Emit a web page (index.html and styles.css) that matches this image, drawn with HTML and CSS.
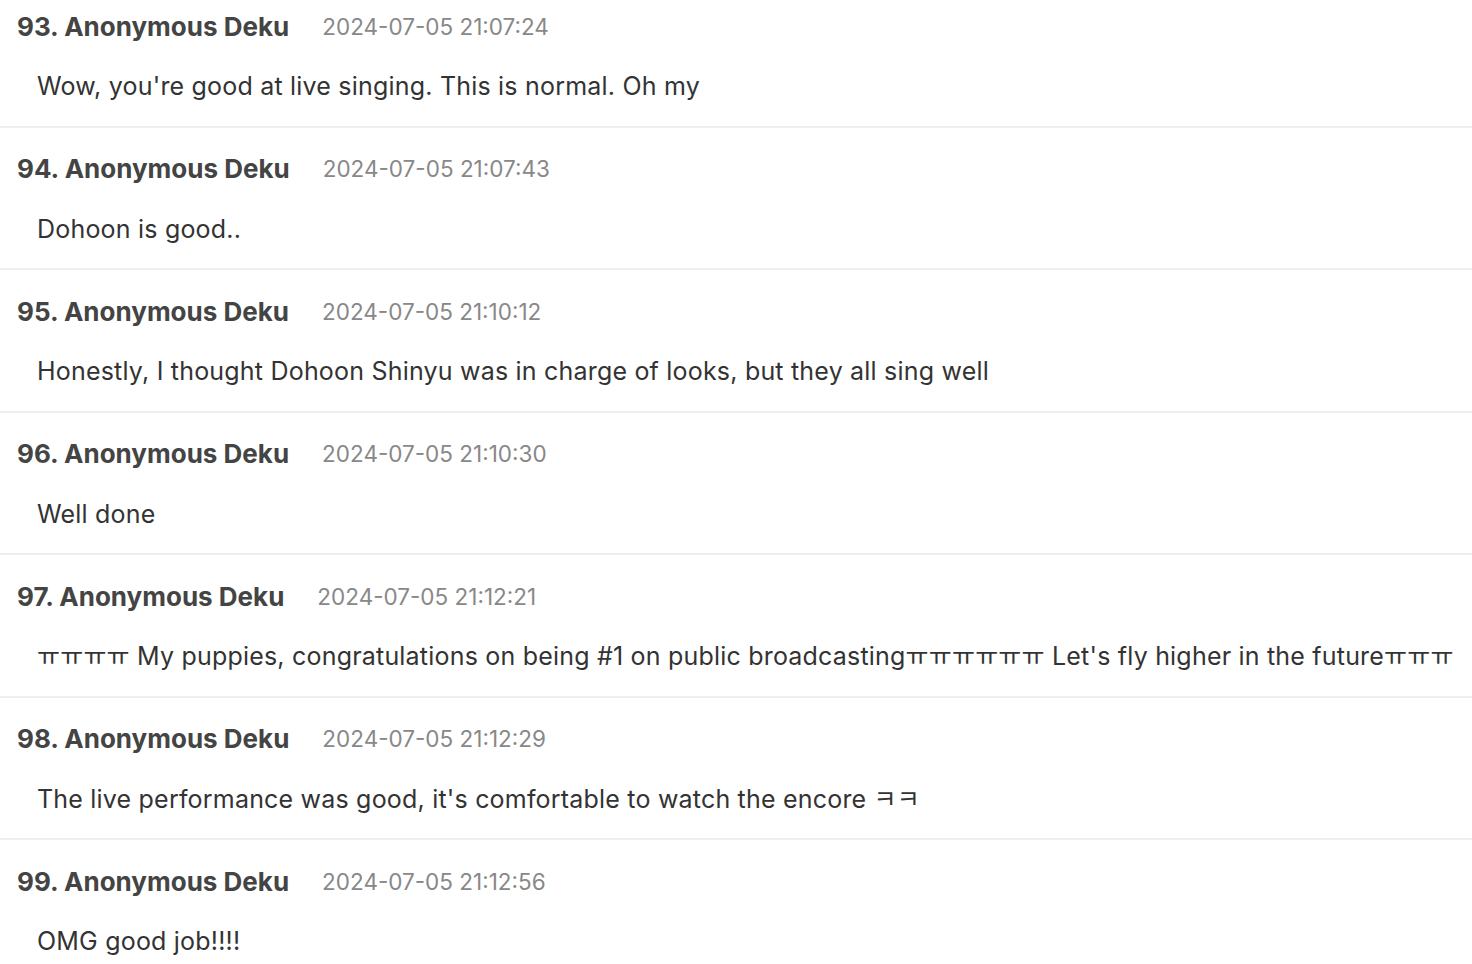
FILE: index.html
```html
<!DOCTYPE html>
<html lang="en">
<head>
<meta charset="utf-8">
<link rel="stylesheet" href="styles.css">
</head>
<body>
<ul class="comments">
  <li class="comment">
    <div class="head"><span class="name">93. Anonymous Deku</span><span class="date">2024-07-05 21:07:24</span></div>
    <p class="text">Wow, you're good at live singing. This is normal. Oh my</p>
  </li>
  <li class="comment">
    <div class="head"><span class="name">94. Anonymous Deku</span><span class="date">2024-07-05 21:07:43</span></div>
    <p class="text">Dohoon is good..</p>
  </li>
  <li class="comment">
    <div class="head"><span class="name">95. Anonymous Deku</span><span class="date">2024-07-05 21:10:12</span></div>
    <p class="text">Honestly, I thought Dohoon Shinyu was in charge of looks, but they all sing well</p>
  </li>
  <li class="comment">
    <div class="head"><span class="name">96. Anonymous Deku</span><span class="date">2024-07-05 21:10:30</span></div>
    <p class="text">Well done</p>
  </li>
  <li class="comment">
    <div class="head"><span class="name">97. Anonymous Deku</span><span class="date">2024-07-05 21:12:21</span></div>
    <p class="text">ㅠㅠㅠㅠ My puppies, congratulations on being #1 on public broadcastingㅠㅠㅠㅠㅠㅠ Let's fly higher in the futureㅠㅠㅠ</p>
  </li>
  <li class="comment">
    <div class="head"><span class="name">98. Anonymous Deku</span><span class="date">2024-07-05 21:12:29</span></div>
    <p class="text">The live performance was good, it's comfortable to watch the encore ㅋㅋ</p>
  </li>
  <li class="comment">
    <div class="head"><span class="name">99. Anonymous Deku</span><span class="date">2024-07-05 21:12:56</span></div>
    <p class="text">OMG good job!!!!</p>
  </li>
</ul>
</body>
</html>
```
FILE: styles.css
```css
html, body {
  margin: 0;
  padding: 0;
  background: #ffffff;
}
body {
  font-family: Inter, "Noto Sans CJK KR", sans-serif;
  overflow: hidden;
}
.comments {
  list-style: none;
  margin: 0;
  padding: 0;
}
.comment {
  padding: 24px 0 22.5px 0;
  border-bottom: 2px solid #eeeeee;
}
.comment:first-child {
  padding-top: 9px;
}
.head {
  display: flex;
  align-items: center;
  gap: 33px;
  height: 34px;
  padding-left: 17px;
}
.name {
  font-size: 26px;
  font-weight: 700;
  color: #444444;
}
.date {
  font-size: 22.5px;
  color: #888888;
}
.text {
  margin: 26px 0 0 0;
  padding-left: 37px;
  font-size: 25px;
  letter-spacing: 0.2px;
  line-height: 34px;
  color: #333333;
  white-space: nowrap;
}
```
